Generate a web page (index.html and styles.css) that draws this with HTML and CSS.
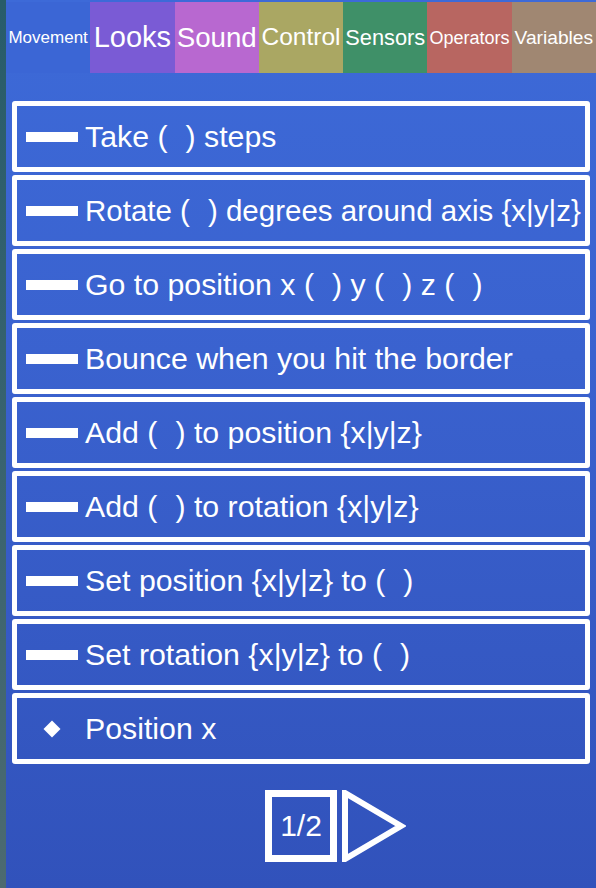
FILE: index.html
```html
<!DOCTYPE html>
<html>
<head>
<meta charset="utf-8">
<link rel="stylesheet" href="styles.css">
</head>
<body>
<div class="app">
  <div class="strip"></div>
  <div class="panel">
    <div class="tabs">
      <div class="tab t-movement"><span style="font-size:17px">Movement</span></div>
      <div class="tab t-looks"><span style="font-size:29px">Looks</span></div>
      <div class="tab t-sound"><span style="font-size:27.7px">Sound</span></div>
      <div class="tab t-control"><span style="font-size:24.5px">Control</span></div>
      <div class="tab t-sensors"><span style="font-size:21.8px">Sensors</span></div>
      <div class="tab t-operators"><span style="font-size:18px">Operators</span></div>
      <div class="tab t-variables"><span style="font-size:19.2px">Variables</span></div>
    </div>
    <div class="cards">
      <div class="card"><span class="dash"></span><span class="label">Take (<span class="blank">&nbsp;&nbsp;</span>) steps</span></div>
      <div class="card"><span class="dash"></span><span class="label label-fit">Rotate (<span class="blank">&nbsp;&nbsp;</span>) degrees around axis {x|y|z}</span></div>
      <div class="card"><span class="dash"></span><span class="label">Go to position x (<span class="blank">&nbsp;&nbsp;</span>) y (<span class="blank">&nbsp;&nbsp;</span>) z (<span class="blank">&nbsp;&nbsp;</span>)</span></div>
      <div class="card"><span class="dash"></span><span class="label">Bounce when you hit the border</span></div>
      <div class="card"><span class="dash"></span><span class="label">Add (<span class="blank">&nbsp;&nbsp;</span>) to position {x|y|z}</span></div>
      <div class="card"><span class="dash"></span><span class="label">Add (<span class="blank">&nbsp;&nbsp;</span>) to rotation {x|y|z}</span></div>
      <div class="card"><span class="dash"></span><span class="label">Set position {x|y|z} to (<span class="blank">&nbsp;&nbsp;</span>)</span></div>
      <div class="card"><span class="dash"></span><span class="label">Set rotation {x|y|z} to (<span class="blank">&nbsp;&nbsp;</span>)</span></div>
      <div class="card"><span class="diamond-wrap"><span class="diamond"></span></span><span class="label">Position x</span></div>
    </div>
    <div class="pager">
      <div class="pager-left"></div>
      <div class="page-box">1/2</div>
      <div class="pager-right">
        <svg class="next" width="64" height="72" viewBox="0 0 64 72">
          <polygon points="3,3 3,69 59,36" fill="none" stroke="#ffffff" stroke-width="6" stroke-linejoin="miter"/>
        </svg>
      </div>
    </div>
  </div>
</div>
</body>
</html>
```
FILE: styles.css
```css
html, body {
  margin: 0;
  padding: 0;
}
body {
  width: 596px;
  height: 888px;
  overflow: hidden;
  font-family: "Liberation Sans", Arial, sans-serif;
  color: #ffffff;
}
.app {
  display: flex;
  width: 596px;
  height: 888px;
}
.strip {
  width: 6px;
  flex: none;
  background: linear-gradient(#285c6a, #3c6470 60%, #4c6a70);
}
.panel {
  flex: 1;
  display: flex;
  flex-direction: column;
  padding: 2px 0 0 0;
  background: linear-gradient(#3d6ad8, #3a62cf 40%, #3152bb);
}
.tabs {
  display: grid;
  grid-template-columns: repeat(7, 1fr);
  height: 71px;
}
.tab {
  display: flex;
  align-items: center;
  justify-content: center;
  white-space: nowrap;
  overflow: hidden;
  line-height: 1;
}
.t-movement { background: #3b66d5; }
.t-looks { background: #7a5bd5; }
.t-sound { background: #b868d0; }
.t-control { background: #aaa763; }
.t-sensors { background: #3f9068; }
.t-operators { background: #b86661; }
.t-variables { background: #a08772; }
.cards {
  display: flex;
  flex-direction: column;
  gap: 3px;
  margin: 28px 6px 0 6px;
}
.card {
  height: 61px;
  border: 5px solid #ffffff;
  border-radius: 3px;
  display: flex;
  align-items: center;
  padding-left: 9px;
}
.dash {
  width: 52px;
  height: 10px;
  background: #ffffff;
  flex: none;
}
.diamond-wrap {
  width: 52px;
  height: 20px;
  display: flex;
  align-items: center;
  justify-content: center;
  flex: none;
}
.diamond {
  width: 12px;
  height: 12px;
  background: #ffffff;
  transform: rotate(45deg);
}
.label {
  margin-left: 7px;
  font-size: 30.3px;
  white-space: nowrap;
}
.label-fit {
  font-size: 29.5px;
}
.blank {
  display: inline-block;
  width: 18px;
}
.pager {
  display: grid;
  grid-template-columns: 1fr auto 1fr;
  column-gap: 5px;
  margin-top: 26px;
  align-items: center;
}
.page-box {
  width: 58px;
  height: 58px;
  border: 7px solid #ffffff;
  display: flex;
  align-items: center;
  justify-content: center;
  font-size: 30px;
}
.pager-right {
  display: flex;
}
.next {
  display: block;
}
```
